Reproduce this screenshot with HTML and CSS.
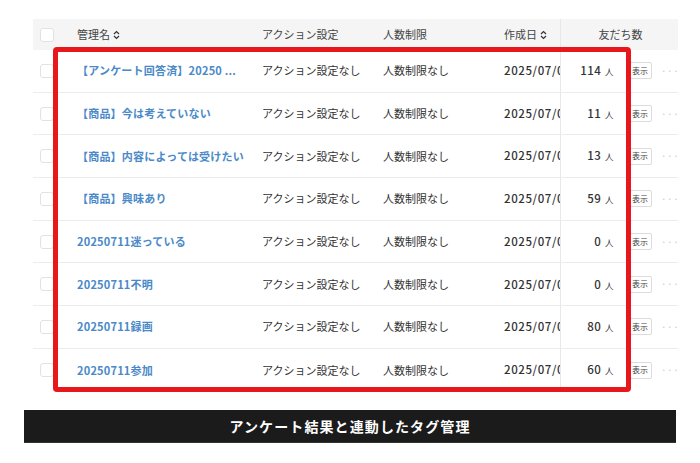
FILE: index.html
```html
<!DOCTYPE html>
<html lang="ja">
<head>
<meta charset="utf-8">
<link rel="stylesheet" href="styles.css">
</head>
<body>
<div class="page">
  <div class="table">
    <div class="row head">
      <div class="c-check"><span class="box"></span></div>
      <div class="c-name">管理名 <span class="sort"><svg width="7" height="10" viewBox="0 0 7 10"><path d="M1 4 L3.5 1.5 L6 4 M1 6 L3.5 8.5 L6 6" fill="none" stroke="#333" stroke-width="1.2"/></svg></span></div>
      <div class="c-act">アクション設定</div>
      <div class="c-lim">人数制限</div>
      <div class="c-date">作成日 <span class="sort"><svg width="7" height="10" viewBox="0 0 7 10"><path d="M1 4 L3.5 1.5 L6 4 M1 6 L3.5 8.5 L6 6" fill="none" stroke="#333" stroke-width="1.2"/></svg></span></div>
      <div class="c-friends head-friends">友だち数</div>
    </div>

    <div class="row">
      <div class="c-check"><span class="box"></span></div>
      <div class="c-name"><a>【アンケート回答済】20250 ...</a></div>
      <div class="c-act">アクション設定なし</div>
      <div class="c-lim">人数制限なし</div>
      <div class="c-date">2025/07/01</div>
      <div class="c-friends"><span class="num">114<small>人</small></span><span class="btn">表示</span><span class="dots">···</span></div>
    </div>
    <div class="row">
      <div class="c-check"><span class="box"></span></div>
      <div class="c-name"><a>【商品】今は考えていない</a></div>
      <div class="c-act">アクション設定なし</div>
      <div class="c-lim">人数制限なし</div>
      <div class="c-date">2025/07/01</div>
      <div class="c-friends"><span class="num">11<small>人</small></span><span class="btn">表示</span><span class="dots">···</span></div>
    </div>
    <div class="row">
      <div class="c-check"><span class="box"></span></div>
      <div class="c-name"><a>【商品】内容によっては受けたい</a></div>
      <div class="c-act">アクション設定なし</div>
      <div class="c-lim">人数制限なし</div>
      <div class="c-date">2025/07/01</div>
      <div class="c-friends"><span class="num">13<small>人</small></span><span class="btn">表示</span><span class="dots">···</span></div>
    </div>
    <div class="row">
      <div class="c-check"><span class="box"></span></div>
      <div class="c-name"><a>【商品】興味あり</a></div>
      <div class="c-act">アクション設定なし</div>
      <div class="c-lim">人数制限なし</div>
      <div class="c-date">2025/07/01</div>
      <div class="c-friends"><span class="num">59<small>人</small></span><span class="btn">表示</span><span class="dots">···</span></div>
    </div>
    <div class="row">
      <div class="c-check"><span class="box"></span></div>
      <div class="c-name"><a>20250711迷っている</a></div>
      <div class="c-act">アクション設定なし</div>
      <div class="c-lim">人数制限なし</div>
      <div class="c-date">2025/07/01</div>
      <div class="c-friends"><span class="num">0<small>人</small></span><span class="btn">表示</span><span class="dots">···</span></div>
    </div>
    <div class="row">
      <div class="c-check"><span class="box"></span></div>
      <div class="c-name"><a>20250711不明</a></div>
      <div class="c-act">アクション設定なし</div>
      <div class="c-lim">人数制限なし</div>
      <div class="c-date">2025/07/01</div>
      <div class="c-friends"><span class="num">0<small>人</small></span><span class="btn">表示</span><span class="dots">···</span></div>
    </div>
    <div class="row">
      <div class="c-check"><span class="box"></span></div>
      <div class="c-name"><a>20250711録画</a></div>
      <div class="c-act">アクション設定なし</div>
      <div class="c-lim">人数制限なし</div>
      <div class="c-date">2025/07/01</div>
      <div class="c-friends"><span class="num">80<small>人</small></span><span class="btn">表示</span><span class="dots">···</span></div>
    </div>
    <div class="row last">
      <div class="c-check"><span class="box"></span></div>
      <div class="c-name"><a>20250711参加</a></div>
      <div class="c-act">アクション設定なし</div>
      <div class="c-lim">人数制限なし</div>
      <div class="c-date">2025/07/01</div>
      <div class="c-friends"><span class="num">60<small>人</small></span><span class="btn">表示</span><span class="dots">···</span></div>
    </div>

    <div class="highlight"></div>
  </div>

  <div class="banner">アンケート結果と連動したタグ管理</div>
</div>
</body>
</html>
```

FILE: styles.css
```css
* { box-sizing: border-box; }
html, body { margin: 0; padding: 0; background: #fff; }
body {
  font-family: "Noto Sans CJK JP", "Noto Sans", sans-serif;
  color: #333;
  width: 700px;
  height: 463px;
  overflow: hidden;
}
.page {
  padding: 19px 0 0 0;
}
.table {
  position: relative;
  margin-left: 33px;
  width: 645px;
}
.row {
  display: grid;
  grid-template-columns: 44px 185px 121px 121px 56px 118px;
  height: 42.7px;
  align-items: center;
  border-bottom: 1px solid #ececec;
  font-size: 11px;
  line-height: 1;
}
.row.last { border-bottom: none; }
.row.head {
  height: 31px;
  background: #f5f5f5;
  border-bottom: none;
  font-size: 11px;
  color: #444;
}
.row > div {
  height: 100%;
  display: flex;
  align-items: center;
  white-space: nowrap;
  overflow: hidden;
}
.c-check { padding-left: 7px; }
.box {
  display: block;
  width: 14px;
  height: 14px;
  border: 1px solid #e2e2e2;
  border-radius: 3px;
  background: #fff;
}
.sort { display: inline-flex; margin-left: 3px; }
.c-name a {
  color: #4a89c8;
  font-weight: 700;
  font-size: 11px;
  letter-spacing: 0.2px;
}
.c-date {
  font-size: 11.5px;
  font-weight: 500;
  letter-spacing: 0.6px;
  color: #333;
}
.row.head .c-date {
  font-size: 11px;
  font-weight: 400;
  letter-spacing: 0;
  color: #444;
}
.c-friends {
  border-left: 1px solid #e8e8e8;
  justify-content: flex-start;
}
.head-friends {
  justify-content: center;
  padding-left: 2px;
}
.num {
  flex: none;
  width: 53px;
  text-align: right;
  font-size: 11.5px;
  font-weight: 500;
  color: #333;
  letter-spacing: 0.4px;
}
.num small {
  font-size: 8.5px;
  font-weight: 400;
  margin-left: 4px;
}
.btn {
  flex: none;
  margin-left: 14px;
  width: 24px;
  height: 17px;
  border: 1px solid #dcdcdc;
  border-radius: 2px;
  font-size: 8px;
  display: flex;
  align-items: center;
  justify-content: center;
  color: #444;
  background: #fff;
}
.dots {
  margin-left: 9px;
  color: #c8c8c8;
  font-size: 10px;
  letter-spacing: 0.5px;
}
.highlight {
  position: absolute;
  left: 20px;
  top: 28px;
  width: 578px;
  height: 345px;
  border: 5px solid #e8171b;
  border-radius: 4px;
  pointer-events: none;
}
.banner {
  margin: 18px 0 0 24px;
  width: 652px;
  height: 33px;
  background: #1b1b1b;
  color: #fff;
  font-weight: 700;
  font-size: 14px;
  letter-spacing: 1.1px;
  display: flex;
  align-items: center;
  justify-content: center;
  border-bottom: 1px solid #333;
}
```
